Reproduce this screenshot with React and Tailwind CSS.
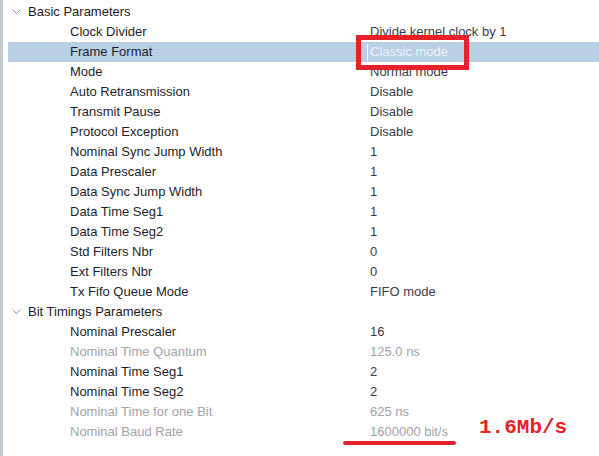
import React from "react";

const basic = [
  ["Clock Divider", "Divide kernel clock by 1"],
  ["Frame Format", "Classic mode", "sel"],
  ["Mode", "Normal mode"],
  ["Auto Retransmission", "Disable"],
  ["Transmit Pause", "Disable"],
  ["Protocol Exception", "Disable"],
  ["Nominal Sync Jump Width", "1"],
  ["Data Prescaler", "1"],
  ["Data Sync Jump Width", "1"],
  ["Data Time Seg1", "1"],
  ["Data Time Seg2", "1"],
  ["Std Filters Nbr", "0"],
  ["Ext Filters Nbr", "0"],
  ["Tx Fifo Queue Mode", "FIFO mode"],
];

const timing = [
  ["Nominal Prescaler", "16"],
  ["Nominal Time Quantum", "125.0 ns", "dis"],
  ["Nominal Time Seg1", "2"],
  ["Nominal Time Seg2", "2"],
  ["Nominal Time for one Bit", "625 ns", "dis"],
  ["Nominal Baud Rate", "1600000 bit/s", "dis"],
];

function Chevron() {
  return (
    <svg width="9" height="6" viewBox="0 0 9 6" className="shrink-0">
      <path d="M0.5 0.5 L4.5 4.5 L8.5 0.5" fill="none" stroke="#8a9099" strokeWidth="1" />
    </svg>
  );
}

function Group({ title }) {
  return (
    <div className="flex h-[20px] items-center">
      <div className="w-[20px] pl-[4px] flex items-center">
        <Chevron />
      </div>
      <span className="text-[#1a1a24]">{title}</span>
    </div>
  );
}

function Row({ label, value, kind }) {
  const sel = kind === "sel";
  const dis = kind === "dis";
  return (
    <div className={`flex h-[20px] items-center ${sel ? "bg-[#b9cfe5]" : ""}`}>
      <span className={`w-[362px] pl-[62px] whitespace-nowrap ${dis ? "text-[#a3a3a8]" : "text-[#1e1e2c]"}`}>{label}</span>
      {sel ? (
        <span className="relative flex items-center h-[20px]">
          <span className="absolute left-[-3px] top-[2px] h-[17px] w-[1px] bg-white"></span>
          <span className="text-[#eef3f9]">{value}</span>
          <span className="absolute left-[-14px] top-[-7px] w-[113px] h-[35px] border-[5px] border-[#e8202a]"></span>
        </span>
      ) : (
        <span className={`whitespace-nowrap ${dis ? "text-[#a3a3a8]" : "text-[#3c3c4a]"}`}>{value}</span>
      )}
    </div>
  );
}

export default function App() {
  return (
    <div className="w-[599px] h-[456px] bg-white flex overflow-hidden text-[13px] font-['Liberation_Sans',Arial,sans-serif]">
      <div className="w-[3px] bg-[#c2cad2] shrink-0"></div>
      <div className="flex-1 ml-[5px] pt-[2px] relative">
        <Group title="Basic Parameters" />
        {basic.map(([l, v, k]) => (
          <Row key={l} label={l} value={v} kind={k} />
        ))}
        <Group title="Bit Timings Parameters" />
        {timing.map(([l, v, k]) => (
          <Row key={l} label={l} value={v} kind={k} />
        ))}
        <div className="absolute left-[335px] top-[441px] w-[113px] h-[4px] rounded-full bg-[#e8202a]"></div>
        <div className="absolute left-[471px] top-[414px] text-[21px] leading-[28px] font-bold text-[#e8202a] font-['Liberation_Mono',monospace]">1.6Mb/s</div>
      </div>
    </div>
  );
}
